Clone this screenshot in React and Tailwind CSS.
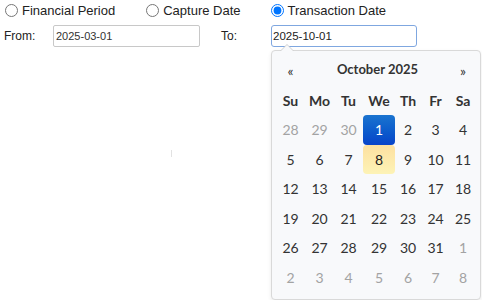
import React from 'react';

const weeks = [
  [[28, 'o'], [29, 'o'], [30, 'o'], [1, 'a'], [2], [3], [4]],
  [[5], [6], [7], [8, 't'], [9], [10], [11]],
  [[12], [13], [14], [15], [16], [17], [18]],
  [[19], [20], [21], [22], [23], [24], [25]],
  [[26], [27], [28], [29], [30], [31], [1, 'o']],
  [[2, 'o'], [3, 'o'], [4, 'o'], [5, 'o'], [6, 'o'], [7, 'o'], [8, 'o']],
];

const days = ['Su', 'Mo', 'Tu', 'We', 'Th', 'Fr', 'Sa'];

const cellClass = (kind) => {
  if (kind === 'a') return 'rounded-[4px] bg-linear-to-b from-[#1b74cf] to-[#0a43c9] text-white';
  if (kind === 't') return 'rounded-[4px] bg-linear-to-b from-[#fde0a0] to-[#fdf3b6] text-[#222]';
  if (kind === 'o') return 'text-[#a3a3a3]';
  return 'text-[#333]';
};

const Radio = ({ checked, label, className }) => (
  <label className={`flex items-center gap-[4px] ${className}`}>
    <input type="radio" name="dateType" defaultChecked={checked} className="m-0 w-[13px] h-[13px]" />
    <span>{label}</span>
  </label>
);

const Calendar = () => {
  return (
    <div className="absolute left-[271px] top-[50px] w-[210px] h-[250px] bg-[#f8f9fb] border border-[#d9d9d9] rounded-[4px] shadow-[0_2px_4px_rgba(0,0,0,0.08)] px-[4px] pt-[4px] font-['Lato',sans-serif] text-[14px]">
      {/* caret */}
      <div className="absolute left-[8px] top-[-7px] w-0 h-0 border-x-[7px] border-x-transparent border-b-[7px] border-b-[#d0d0d0]" />
      <div className="absolute left-[9px] top-[-6px] w-0 h-0 border-x-[6px] border-x-transparent border-b-[6px] border-b-[#f8f9fb]" />

      <div className="grid grid-cols-[29px_29px_29px_32px_26px_29px_26px] text-center">
        <div className="h-[30px] flex items-center justify-center text-[#333]">«</div>
        <div className="col-span-5 h-[30px] flex items-center justify-center font-bold text-[13px] text-[#333]">October 2025</div>
        <div className="h-[30px] flex items-center justify-center text-[#333]">»</div>

        {days.map((d) => (
          <div key={d} className="h-[30px] flex items-center justify-center font-bold text-[#333]">{d}</div>
        ))}

        {weeks.map((week, wi) =>
          week.map(([n, kind], di) => (
            <div key={`${wi}-${di}`} className={`h-[29.5px] flex items-center justify-center ${cellClass(kind)}`}>
              {n}
            </div>
          ))
        )}
      </div>
    </div>
  );
};

const App = () => {
  return (
    <div className="relative w-[482px] h-[300px] bg-white font-['Liberation_Sans',Arial,sans-serif] text-[13px] text-[#222]">
      <div className="flex items-center h-[21px]">
        <Radio label="Financial Period" className="ml-[5px]" />
        <Radio label="Capture Date" className="ml-[31px]" />
        <Radio label="Transaction Date" checked className="ml-[30px]" />
      </div>

      <div className="flex items-center mt-[4px] text-[12px]">
        <span className="w-[53px] pl-[4px]">From:</span>
        <input
          type="text"
          defaultValue="2025-03-01"
          className="w-[147px] h-[22px] px-[2px] border border-[#c8c8c8] rounded-[2px] text-[11px] text-[#333] outline-none"
        />
        <span className="w-[50px] ml-[21px]">To:</span>
        <input
          type="text"
          defaultValue="2025-10-01"
          className="w-[146px] h-[22px] px-[1px] border border-[#7fa7e0] rounded-[3px] text-[11.5px] text-[#222] outline-none"
        />
      </div>

      {/* stray mark */}
      <div className="absolute left-[171px] top-[150px] w-px h-[7px] bg-[#e2e2e2]" />

      <Calendar />
    </div>
  );
};

export default App;
